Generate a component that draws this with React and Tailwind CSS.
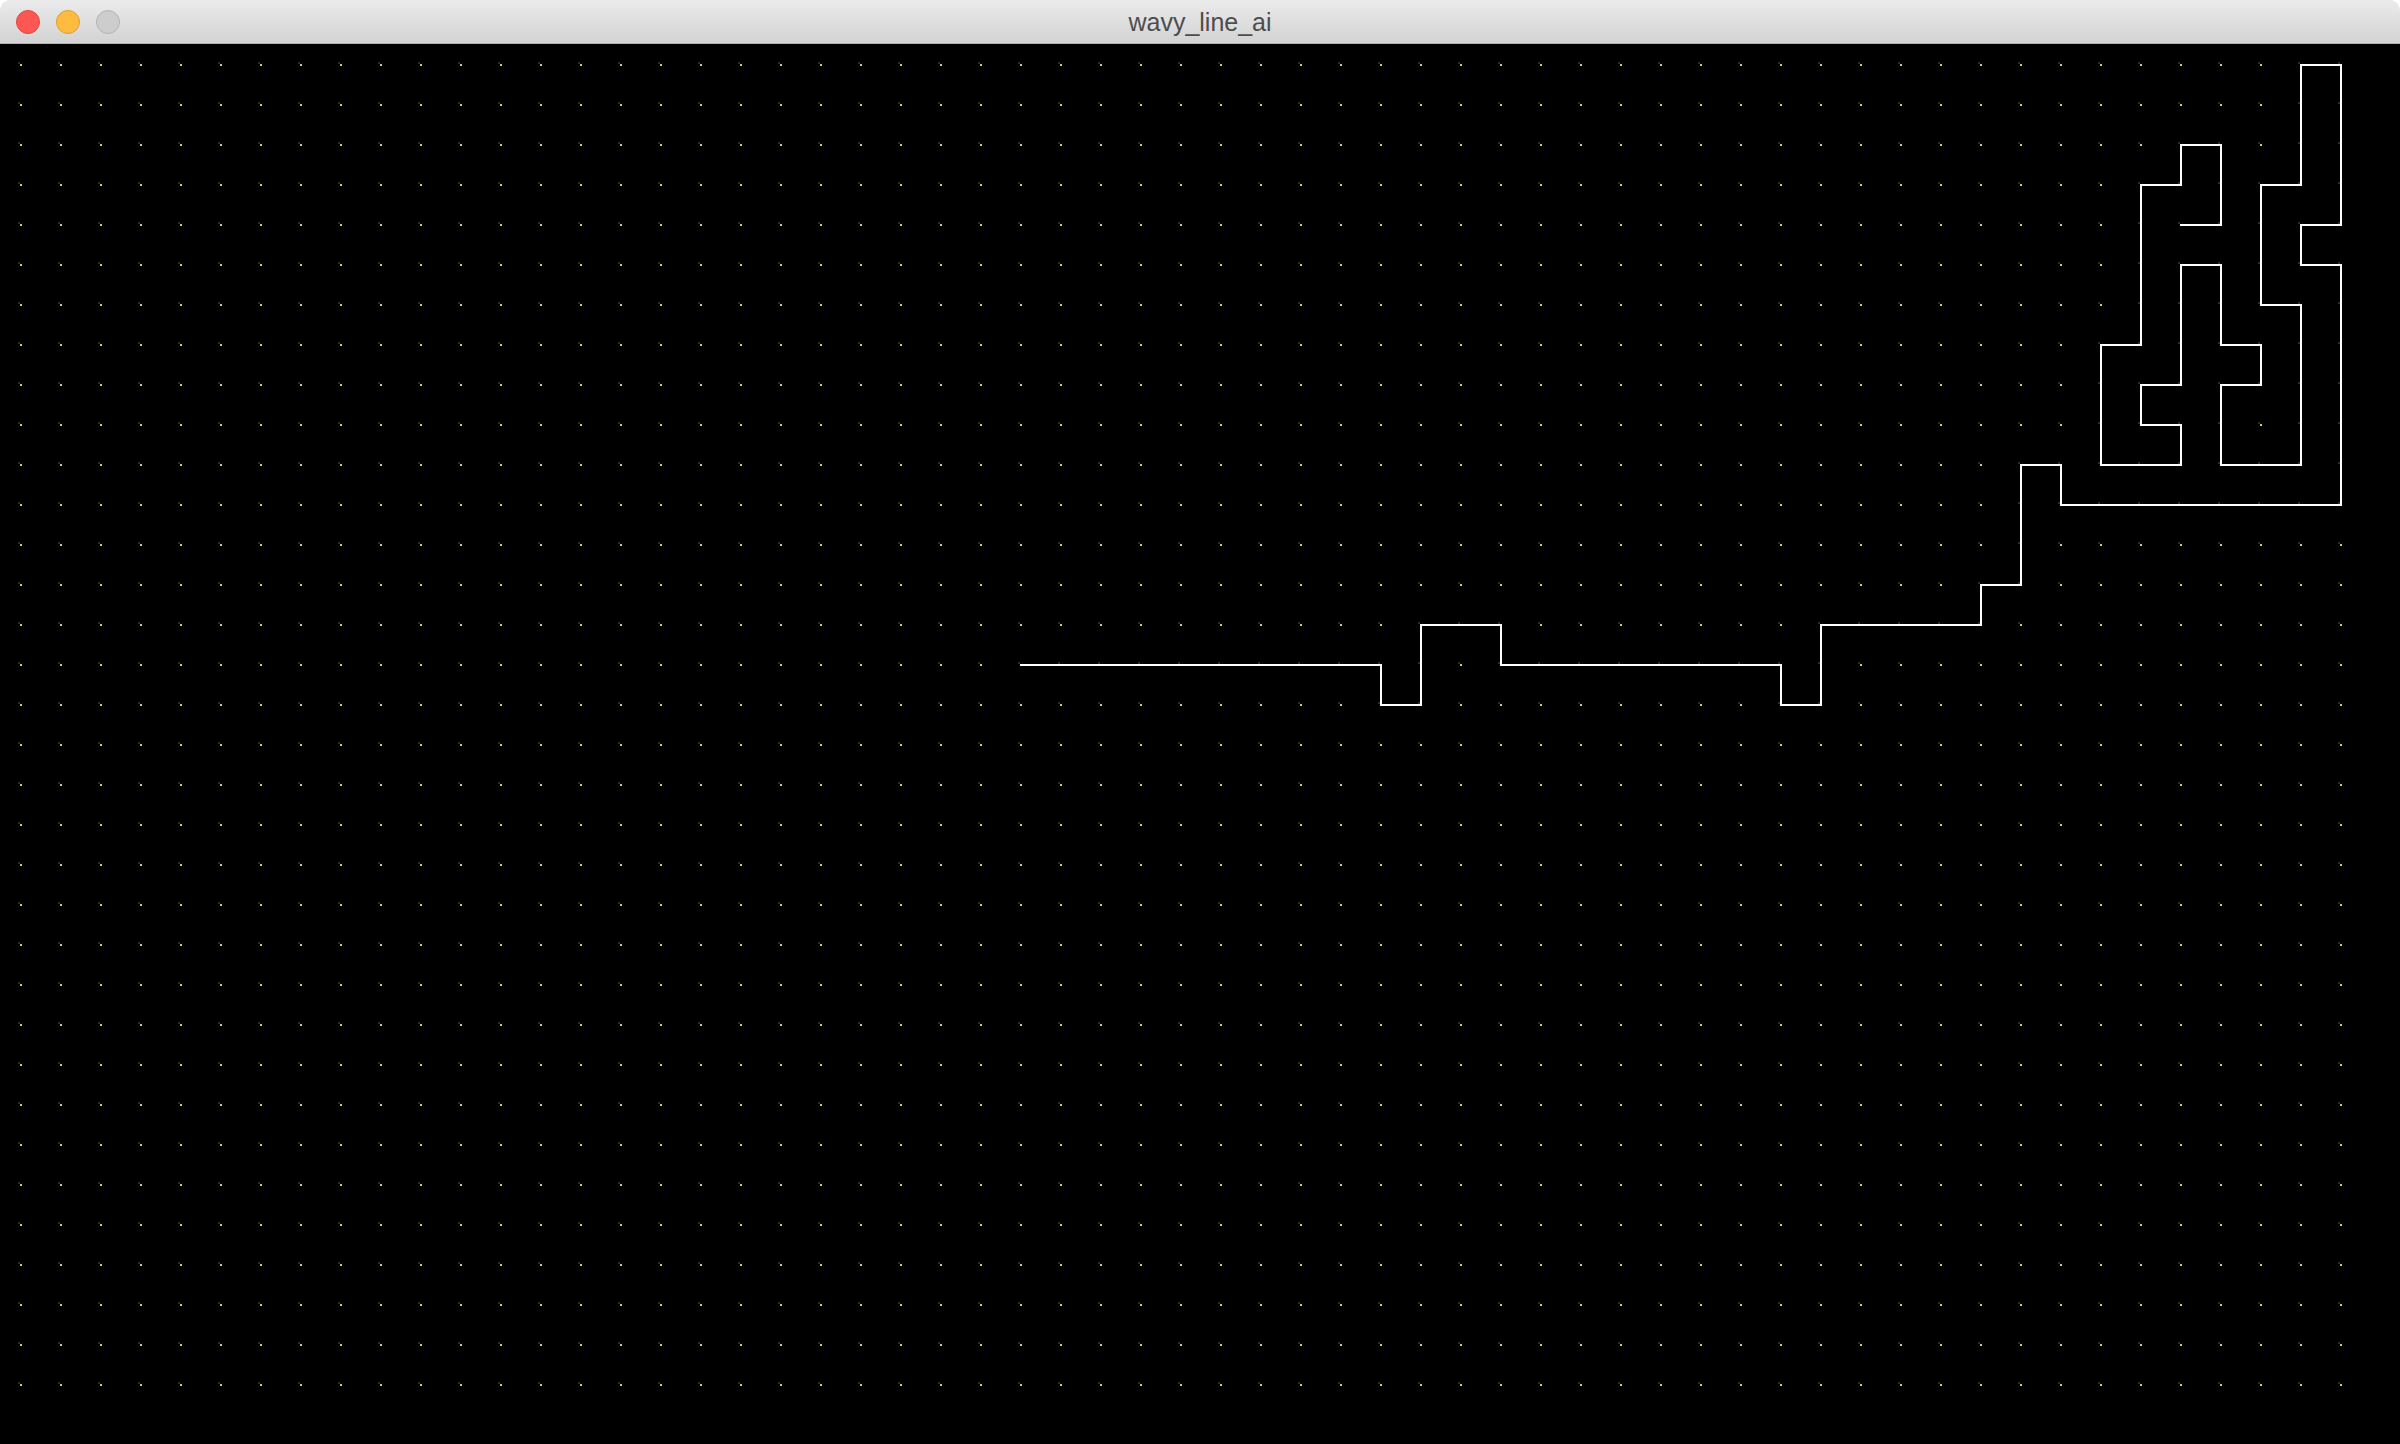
import React from 'react';

// grid points (column, row) of the drawn path
const pathPoints = [
  [25, 15], [34, 15], [34, 16], [35, 16], [35, 14], [37, 14], [37, 15], [44, 15],
  [44, 16], [45, 16], [45, 14], [49, 14], [49, 13], [50, 13], [50, 10], [51, 10],
  [51, 11], [58, 11], [58, 5], [57, 5], [57, 4], [58, 4], [58, 0], [57, 0],
  [57, 3], [56, 3], [56, 6], [57, 6], [57, 10], [55, 10], [55, 8], [56, 8],
  [56, 7], [55, 7], [55, 5], [54, 5], [54, 8], [53, 8], [53, 9], [54, 9],
  [54, 10], [52, 10], [52, 7], [53, 7], [53, 3], [54, 3], [54, 2], [55, 2],
  [55, 4], [54, 4],
];

const CELL = 40;
const OFFSET = 21;

const TitleBar = () => (
  <div className="relative h-[44px] shrink-0 flex items-center justify-center rounded-t-[10px] border-b border-[#b4b4b4] bg-gradient-to-b from-[#ebebeb] to-[#d3d3d3]">
    <div className="absolute left-[16px] top-[10px] flex gap-[16px]">
      <div className="w-[24px] h-[24px] rounded-full bg-[#fc5753] border border-[#df4744]"></div>
      <div className="w-[24px] h-[24px] rounded-full bg-[#fdbc40] border border-[#de9e32]"></div>
      <div className="w-[24px] h-[24px] rounded-full bg-[#cdcdcd] border border-[#b4b4b4]"></div>
    </div>
    <span className="text-[25px] leading-none text-[#4d4d4d] pt-[1px] font-['Liberation_Sans',Arial,sans-serif]">
      wavy_line_ai
    </span>
  </div>
);

const Canvas = () => {
  const d = pathPoints
    .map(([c, r], i) => `${i === 0 ? 'M' : 'L'}${OFFSET + c * CELL} ${OFFSET + r * CELL}`)
    .join(' ');

  return (
    <div className="flex-1 bg-black">
      <svg width="2400" height="1400" viewBox="0 0 2400 1400" className="block" shapeRendering="crispEdges">
        <defs>
          <pattern id="dots" width="40" height="40" patternUnits="userSpaceOnUse">
            <rect x="18" y="18" width="2" height="2" fill="#2c3212" />
            <rect x="20" y="20" width="2" height="2" fill="#c6da46" />
          </pattern>
        </defs>
        <rect x="0" y="0" width="2360" height="1360" fill="url(#dots)" />
        <path d={d} fill="none" stroke="#ffffff" strokeWidth="2" strokeLinecap="square" strokeLinejoin="miter" />
      </svg>
    </div>
  );
};

export default function App() {
  return (
    <div className="w-[2400px] h-[1444px] flex flex-col bg-white overflow-hidden">
      <TitleBar />
      <Canvas />
    </div>
  );
}
